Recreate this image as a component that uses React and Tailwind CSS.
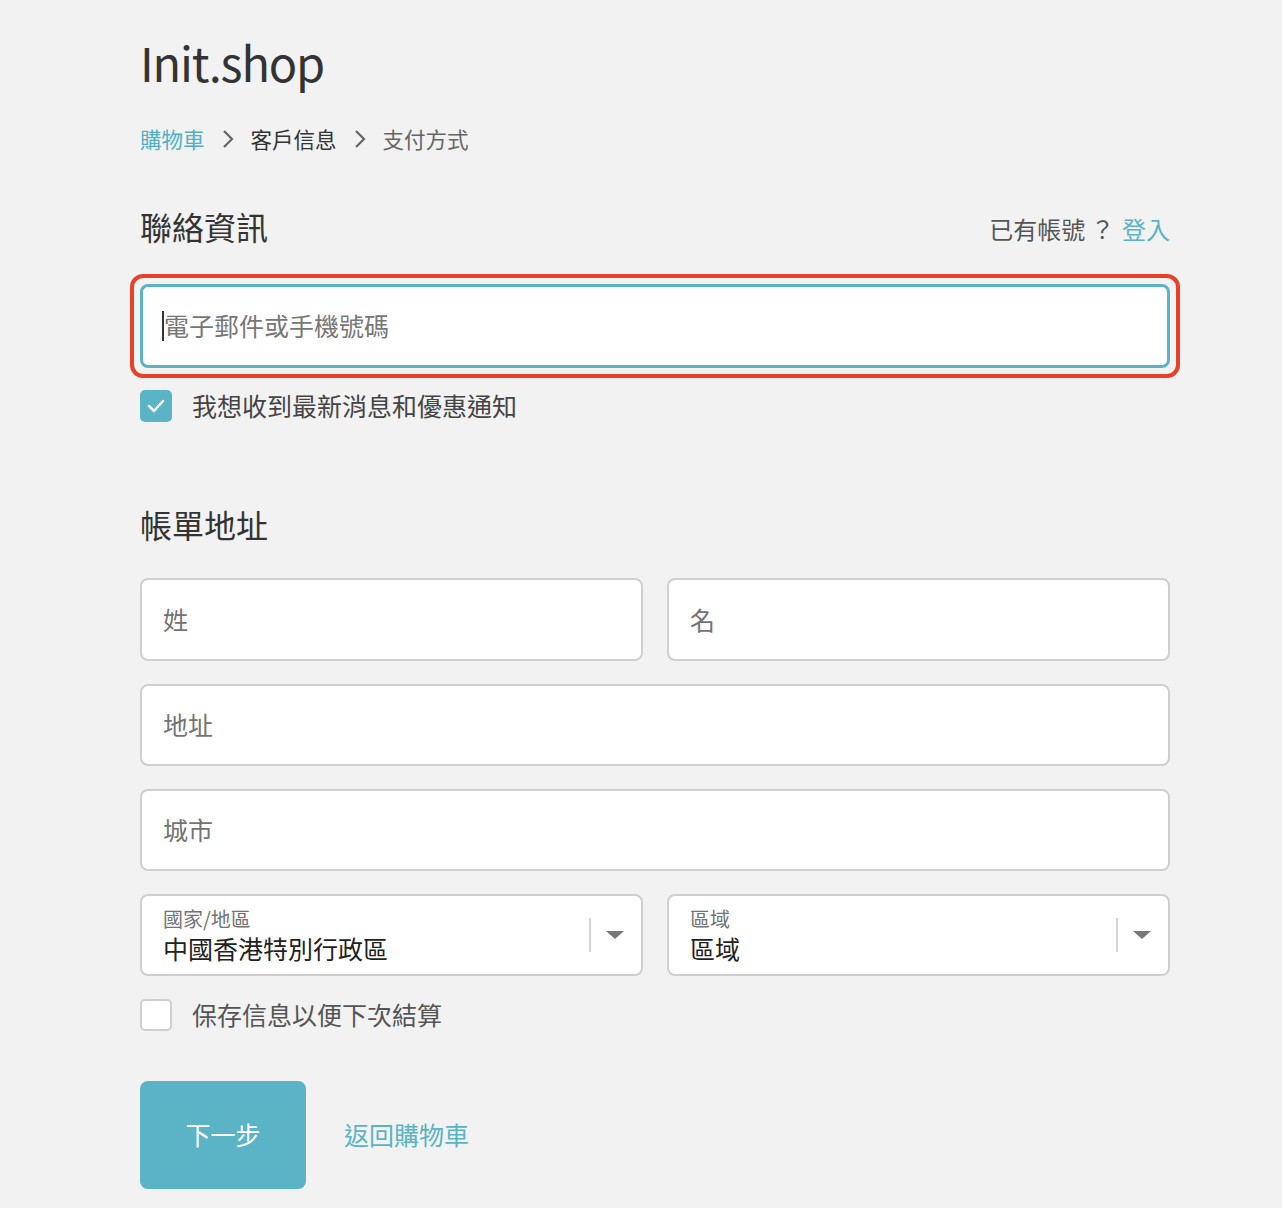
import React from 'react';

const font = { fontFamily: '"Noto Sans CJK TC", "Noto Sans", sans-serif' };

const TextField = ({ placeholder, className = 'h-[82px]' }) => (
  <div className={`bg-white border-2 border-[#cfcfcf] rounded-lg flex items-center px-[21px] ${className}`}>
    <span className="text-[25px] text-[#737373]">{placeholder}</span>
  </div>
);

const SelectField = ({ label, value }) => (
  <div className="h-[82px] bg-white border-2 border-[#cfcfcf] rounded-lg flex items-center pl-[21px] pr-[16px]">
    <div className="flex-1 flex flex-col gap-[4px]">
      <span className="text-[20px] text-[#737373] leading-[22px]">{label}</span>
      <span className="text-[25px] text-[#222] leading-[28px]">{value}</span>
    </div>
    <div className="w-[2px] h-[34px] bg-[#d4d4d4] mr-[14px]" />
    <svg width="20" height="10" viewBox="0 0 20 10">
      <path d="M1 1 L19 1 L10 9 Z" fill="#777" />
    </svg>
  </div>
);

const Chevron = () => (
  <svg width="14" height="20" viewBox="0 0 14 20" className="mx-[16px]">
    <path d="M3 2 L11 10 L3 18" fill="none" stroke="#666" strokeWidth="2.2" />
  </svg>
);

export default function App() {
  return (
    <div className="min-h-[1208px] bg-[#f2f2f2]" style={font}>
      <div className="w-[1030px] ml-[140px] pt-[32px]">
        <h1 className="text-[47px] leading-[60px] text-[#333] tracking-tight">Init.shop</h1>

        <div className="flex items-center mt-[32px] text-[21.5px] leading-[30px]">
          <span className="text-[#4fb0c6]">購物車</span>
          <Chevron />
          <span className="text-[#333]">客戶信息</span>
          <Chevron />
          <span className="text-[#666]">支付方式</span>
        </div>

        <div className="flex items-end justify-between mt-[52px]">
          <h2 className="text-[32px] leading-[40px] text-[#333]">聯絡資訊</h2>
          <div className="text-[24px] leading-[34px] text-[#555]">
            已有帳號 ？ <span className="text-[#5bb3c6] ml-[2px]">登入</span>
          </div>
        </div>

        <div className="mt-[28px] -mx-[10px] border-[4px] border-[#e8412a] rounded-[13px] p-[6px]">
          <div className="h-[84px] bg-white border-[3px] border-[#5bb3c6] rounded-lg flex items-center px-[19px]">
            <span className="w-[2px] h-[30px] bg-[#333]" />
            <span className="text-[25px] text-[#777]">電子郵件或手機號碼</span>
          </div>
        </div>

        <label className="flex items-center h-[32px] mt-[12px]">
          <span className="w-[32px] h-[32px] rounded-[5px] bg-[#5bb3c6] flex items-center justify-center">
            <svg width="20" height="16" viewBox="0 0 20 16">
              <path d="M3 8 L8 13 L17 3" fill="none" stroke="#fff" strokeWidth="2.5" strokeLinecap="round" strokeLinejoin="round" />
            </svg>
          </span>
          <span className="ml-[20px] text-[25px] text-[#444]">我想收到最新消息和優惠通知</span>
        </label>

        <h2 className="mt-[82px] text-[32px] leading-[40px] text-[#333]">帳單地址</h2>

        <div className="mt-[34px] flex flex-col gap-[23px]">
          <div className="grid grid-cols-2 gap-[24px]">
            <TextField placeholder="姓" className="h-[83px]" />
            <TextField placeholder="名" className="h-[83px]" />
          </div>
          <TextField placeholder="地址" />
          <TextField placeholder="城市" />
          <div className="grid grid-cols-2 gap-[24px]">
            <SelectField label="國家/地區" value="中國香港特別行政區" />
            <SelectField label="區域" value="區域" />
          </div>
        </div>

        <label className="flex items-center h-[32px] mt-[23px]">
          <span className="w-[32px] h-[32px] rounded-[5px] bg-white border-2 border-[#cfcfcf]" />
          <span className="ml-[20px] text-[25px] text-[#555]">保存信息以便下次結算</span>
        </label>

        <div className="flex items-center mt-[50px]">
          <button className="w-[166px] h-[108px] rounded-lg bg-[#5bb3c6] text-white text-[25px]">下一步</button>
          <span className="ml-[38px] text-[25px] text-[#5bb3c6]">返回購物車</span>
        </div>
      </div>
    </div>
  );
}
